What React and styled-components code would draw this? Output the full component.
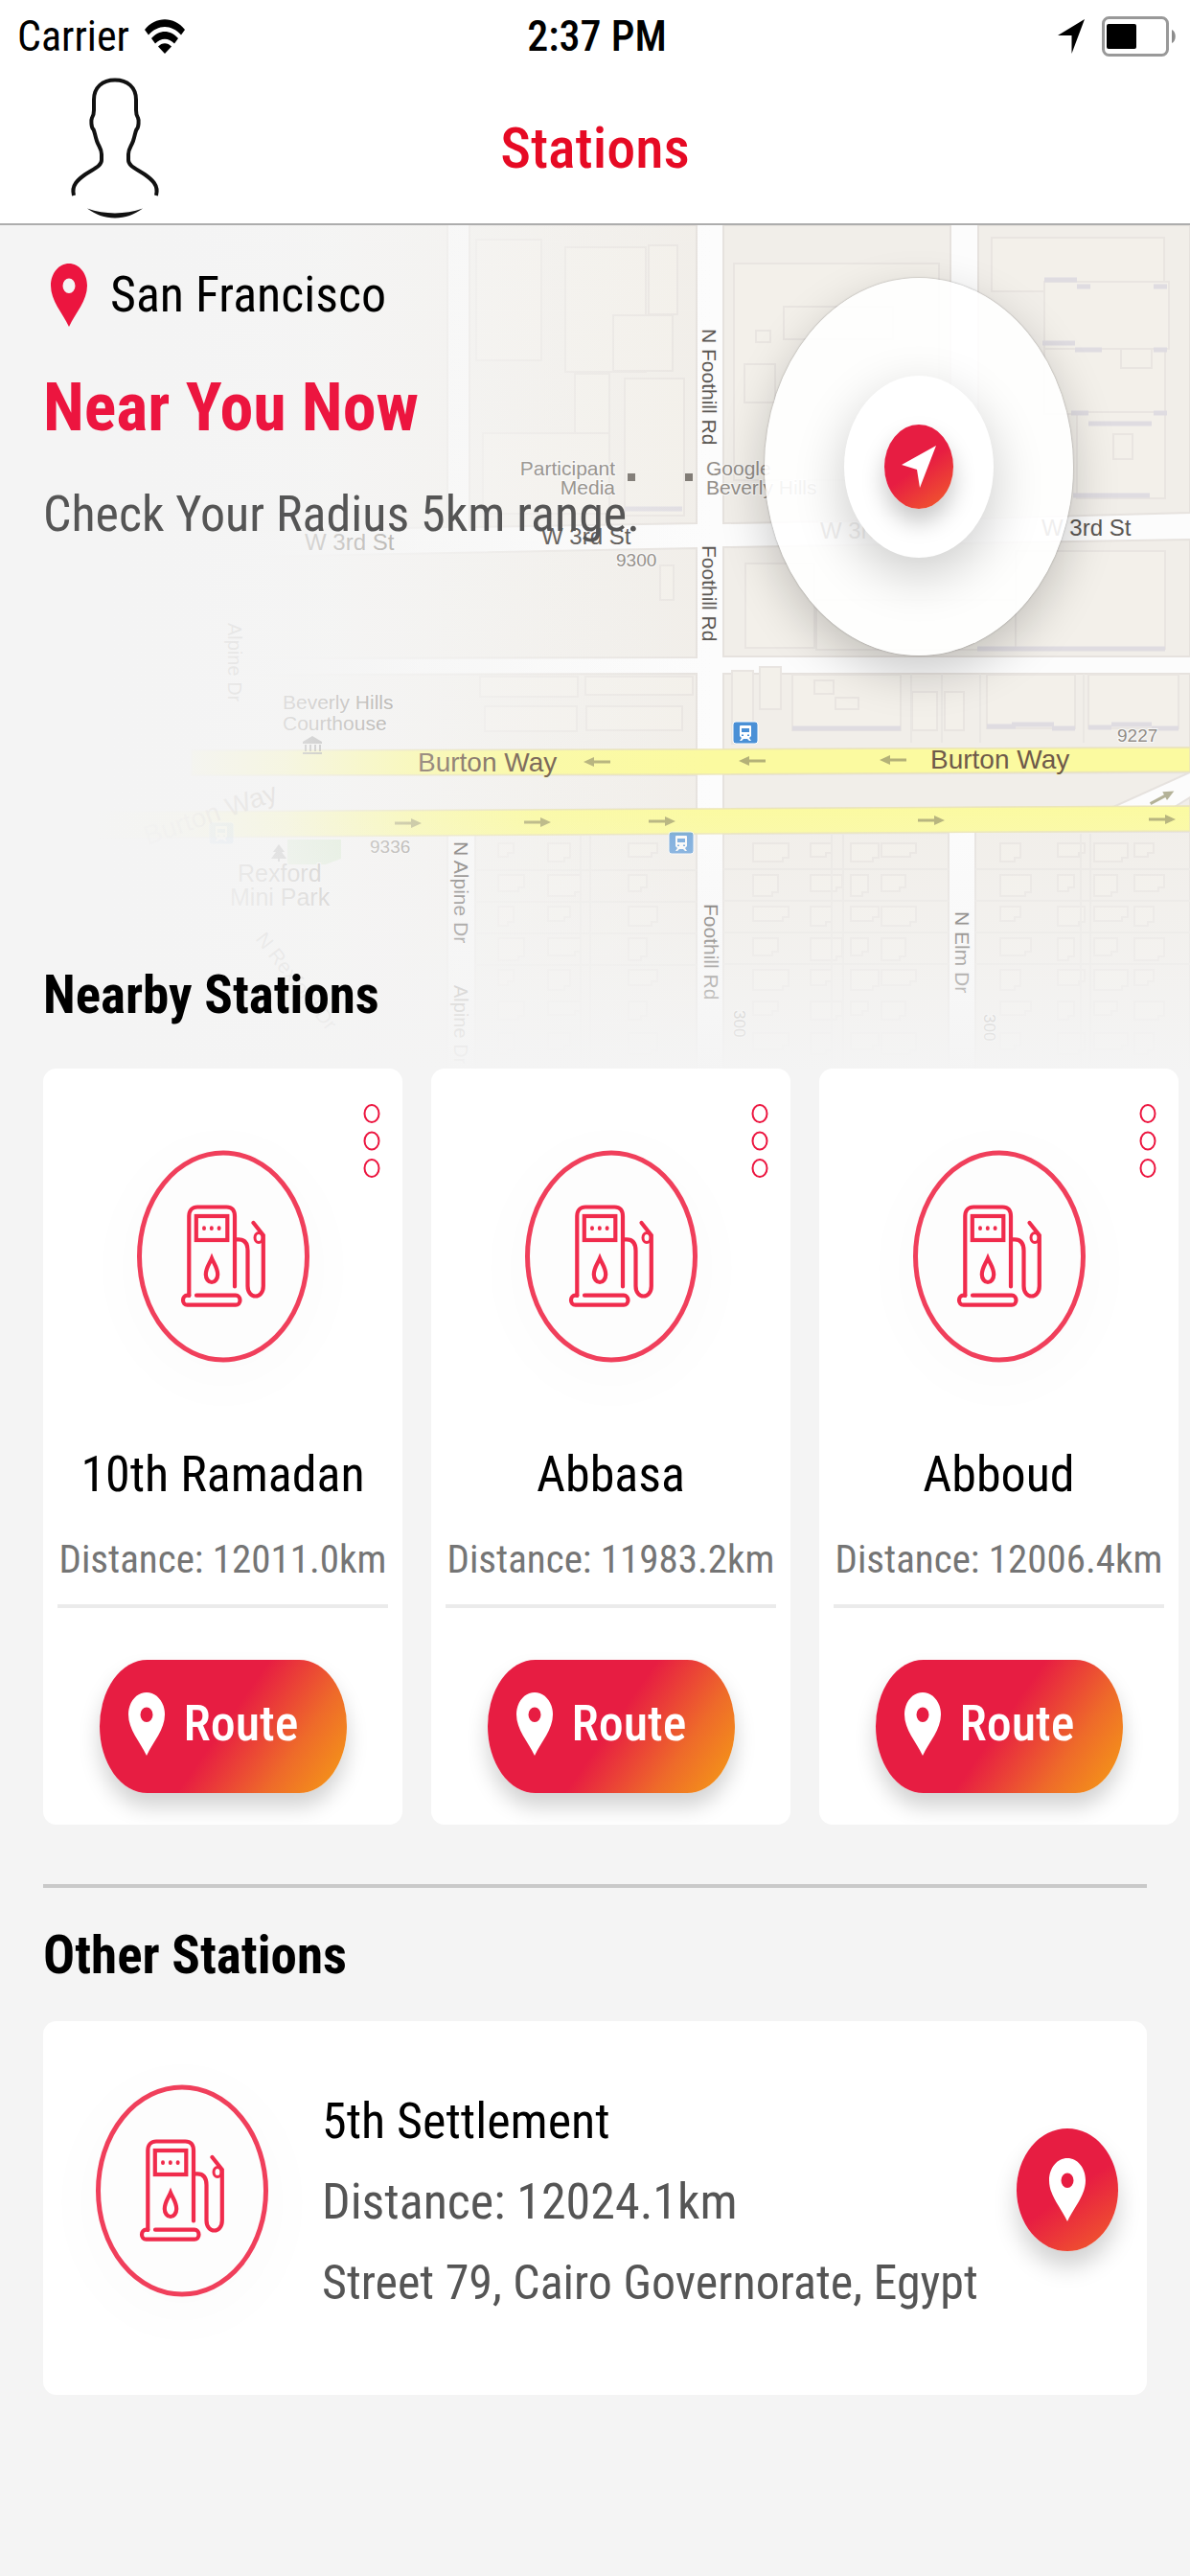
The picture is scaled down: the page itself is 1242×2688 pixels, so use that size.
import React from "react";
import styled, { createGlobalStyle } from "styled-components";

const PAGE_BG = "#f4f4f4";
const RED = "#ec153f";
const GRADIENT = "#e71d42";

const GlobalStyle = createGlobalStyle`
  * { box-sizing: border-box; }
  body {
    margin: 0;
    background: ${PAGE_BG};
    color: #000;
    font-family: "Roboto Condensed", Roboto, "Liberation Sans", sans-serif;
  }
  h1, h2, h3, p { margin: 0; }
  button { border: 0; padding: 0; font-family: inherit; cursor: pointer; }
`;

const Screen = styled.div`
  min-height: 100vh;
  background: ${PAGE_BG};
`;

const TopBar = styled.header`
  background: #fff;
  border-bottom: 2px solid #adadad;
`;

const StatusRow = styled.div`
  display: grid;
  grid-template-columns: 1fr auto 1fr;
  align-items: center;
  height: 76px;
  padding: 0 14px 0 18px;
  font-size: 44px;
  line-height: 52px;
`;

const StatusGroup = styled.div`
  display: flex;
  align-items: center;
  justify-content: ${(p) => (p.$end ? "flex-end" : "flex-start")};
  gap: ${(p) => (p.$end ? 18 : 16)}px;
`;

const Clock = styled.time`
  font-weight: 500;
`;

const NavRow = styled.div`
  display: grid;
  grid-template-columns: 1fr auto 1fr;
  align-items: center;
  height: 157px;
  padding: 0 72px;
`;

const AvatarButton = styled.button`
  justify-self: start;
  display: flex;
  background: none;
`;

const Title = styled.h1`
  font-size: 60px;
  line-height: 72px;
  font-weight: 500;
  color: #e60a24;
`;

const Hero = styled.section`
  position: relative;
  display: flex;
  flex-direction: column;
  min-height: 880px;
  padding: 40px 45px 45px;
`;

const MapLayer = styled.svg`
  position: absolute;
  inset: 0;
  width: 100%;
  height: 100%;
  font-family: "Liberation Sans", sans-serif;
`;

const Place = styled.div`
  position: relative;
  display: flex;
  align-items: center;
  gap: 24px;
  padding-left: 8px;
  font-size: 52px;
  line-height: 64px;
`;

const Lead = styled.h2`
  position: relative;
  margin-top: 42px;
  font-size: 70px;
  line-height: 84px;
  font-weight: 700;
  color: ${RED};
`;

const Hint = styled.p`
  position: relative;
  margin-top: 38px;
  font-size: 52px;
  line-height: 64px;
  color: #555;
`;

const SectionTitle = styled.h2`
  position: relative;
  margin-top: ${(p) => (p.$push ? "auto" : "0")};
  font-size: 55px;
  line-height: 64px;
  font-weight: 700;
`;

const Locator = styled.button`
  position: absolute;
  top: 55px;
  right: 122px;
  display: grid;
  place-items: center;
  width: 322px;
  height: 394px;
  border-radius: 50%;
  background: rgba(255, 255, 255, 0.9);
  box-shadow: 0 18px 50px rgba(0, 0, 0, 0.2), 0 0 2px rgba(0, 0, 0, 0.35);
`;

const LocatorInner = styled.span`
  display: grid;
  place-items: center;
  width: 156px;
  height: 190px;
  border-radius: 50%;
  background: #fff;
  box-shadow: 0 18px 54px rgba(0, 0, 0, 0.2);
`;

const LocatorCore = styled.span`
  display: grid;
  place-items: center;
  width: 72px;
  height: 88px;
  border-radius: 50%;
  background: linear-gradient(145deg, ${GRADIENT} 50%, #f2602a 100%);
  box-shadow: 0 14px 24px rgba(0, 0, 0, 0.22);
`;

const CardRow = styled.ul`
  display: flex;
  gap: 30px;
  margin: 0;
  padding: 0 0 0 45px;
  list-style: none;
  overflow-x: auto;
`;

const Card = styled.li`
  position: relative;
  flex: 0 0 375px;
  display: flex;
  flex-direction: column;
  align-items: center;
  padding: 85px 15px 33px;
  border-radius: 14px;
  background: #fff;
`;

const MoreButton = styled.button`
  position: absolute;
  top: 36px;
  right: 22px;
  display: flex;
  background: none;
`;

const PumpFrame = styled.div`
  display: flex;
  flex: none;
  border-radius: 50%;
  background: #fdfdfd;
  box-shadow: 0 12px 70px 10px rgba(0, 0, 0, 0.02);
`;

const CardName = styled.h3`
  margin-top: 85px;
  font-size: 52px;
  line-height: 64px;
  font-weight: 400;
`;

const CardDistance = styled.p`
  align-self: stretch;
  margin-top: 30px;
  padding-bottom: 21px;
  border-bottom: 4px solid #ebebeb;
  font-size: 41px;
  line-height: 52px;
  text-align: center;
  white-space: nowrap;
  color: #757575;
`;

const RouteButton = styled.button`
  display: flex;
  align-items: center;
  gap: 20px;
  width: 258px;
  height: 139px;
  margin-top: 54px;
  padding: 0 30px 6px;
  border-radius: 50px / 70px;
  background: linear-gradient(125deg, ${GRADIENT} 50%, #ee6a2a 76%, #f59a16 98%);
  box-shadow: 0 14px 22px rgba(0, 0, 0, 0.18);
  color: #fff;
  font-size: 52px;
  line-height: 64px;
  font-weight: 500;
`;

const PinIcon = styled.svg`
  flex: none;
`;

const Others = styled.section`
  display: flex;
  flex-direction: column;
  gap: 37px;
  margin: 62px 45px 0;
  padding-top: 38px;
  border-top: 4px solid #c9c9c9;
`;

const WideCard = styled.article`
  display: flex;
  align-items: flex-start;
  gap: 36px;
  padding: 66px 30px 85px 55px;
  border-radius: 14px;
  background: #fff;
`;

const Details = styled.div`
  flex: 1;
  display: flex;
  flex-direction: column;
  gap: 20px;
  padding: 7px 0 0 20px;
  line-height: 64px;
  color: #555;
`;

const DetailName = styled.h3`
  font-size: 52px;
  font-weight: 400;
  color: #000;
`;

const DetailLine = styled.p`
  font-size: ${(p) => (p.$small ? 50 : 52)}px;
`;

const RoundButton = styled.button`
  display: grid;
  place-items: center;
  flex: none;
  width: 106px;
  height: 128px;
  margin-top: 46px;
  border-radius: 50%;
  background: linear-gradient(145deg, ${GRADIENT} 52%, #f2602a 100%);
  box-shadow: 0 16px 24px rgba(0, 0, 0, 0.18);
`;

function Pin({ color, wide = 38 }) {
  return (
    <PinIcon width={wide} height="66" viewBox="0 0 38 66" preserveAspectRatio="none" aria-hidden="true">
      <path
        fill={color}
        fillRule="evenodd"
        d="M19 0C8.500 0 0 10 0 23c0 16 12 28 19 43 7-15 19-27 19-43C38 10 29.500 0 19 0Zm0 15.500a6.500 7.700 0 1 1 0 15.400a6.500 7.700 0 1 1 0-15.400Z"
      />
    </PinIcon>
  );
}

function Wifi() {
  return (
    <svg width="42" height="36" viewBox="0 0 42 36" aria-hidden="true">
      <path d="M0 11C11-3.500 31-3.500 42 11l-4 5.500C28 5 14 5 4 16.500Z" />
      <path d="M7 20c8-9.500 20-9.500 28 0l-4 5.500c-6-6.500-14-6.500-20 0Z" />
      <path d="M14 28.500c4-4.500 10-4.500 14 0L21 36Z" />
    </svg>
  );
}

function StatusArrow() {
  return (
    <svg width="28" height="36" viewBox="0 0 28 36" aria-hidden="true">
      <path d="M28 0 14.500 36V17H0Z" />
    </svg>
  );
}

function Battery() {
  return (
    <svg width="78" height="42" viewBox="0 0 78 42" aria-hidden="true">
      <rect x="1.500" y="1.500" width="67" height="39" rx="6" fill="#fff" stroke="#999" strokeWidth="3" />
      <rect x="5" y="8" width="31" height="26" rx="2" />
      <path d="M73 14c5 2 5 12 0 14Z" fill="#8c8c8c" />
    </svg>
  );
}

function Avatar() {
  return (
    <svg width="96" height="148" viewBox="-2 0 96 148" fill="none" aria-hidden="true">
      <path
        stroke="#111"
        strokeWidth="4"
        d="M3 123C0 112 8 106 15 101C24 95 32 92 32 86V80C32 74 29 72 27 66C25 60 25 57 23.500 54C21 52 21 44 22 42C24 39 24 37 24 34V23C24 10 33 2.500 46 2.500S68 10 68 23V34C68 37 68 39 70 42C71 44 71 52 68.500 54C67 57 67 60 65 66C63 72 60 74 60 80V86C60 92 68 95 77 101C84 106 92 112 89 123"
      />
      <path fill="#111" d="M17 136.500C36 143 56 143 75 136.500C66 143 57 146.500 46 146.500S26 143 17 136.500Z" />
    </svg>
  );
}

function MoreDots() {
  return (
    <svg width="20" height="80" viewBox="0 0 20 80" fill="#fff" stroke={RED} strokeWidth="2" aria-hidden="true">
      {[11, 39.5, 68].map((y) => (
        <ellipse key={y} cx="10" cy={y} rx="7.500" ry="9" />
      ))}
    </svg>
  );
}

function Pump() {
  return (
    <svg
      width="180"
      height="222"
      viewBox="0 0 180 222"
      fill="none"
      stroke="#f02b4c"
      strokeWidth="4.200"
      strokeLinecap="round"
      aria-hidden="true"
    >
      <ellipse cx="90" cy="111" rx="87.500" ry="108" stroke="#f03f5b" strokeWidth="5" />
      <path d="M54.300 152V69C54.300 63 58 59.500 63 59.500H93.500C99 59.500 102 63 102 69V142.500" />
      <path d="M54.300 151.700H52.500A4.500 5 0 0 0 52.500 161.700H103A4.500 5 0 0 0 103 151.700H62" />
      <rect x="61.800" y="69" width="32.500" height="25" />
      <path d="M78 113C75.500 119 71.800 123 71.800 130A6.200 8 0 0 0 84.200 130C84.200 123 80.500 119 78 113Z" />
      <path d="M103 93.300H106C113 93.300 115.500 98 115.500 105V142C115.500 156 131.800 156 131.800 142V89L121.500 76" />
      <ellipse cx="127" cy="91.500" rx="4" ry="5" strokeWidth="3" />
      <g fill="#f02b4c" stroke="none">
        <ellipse cx="70" cy="81.700" rx="2" ry="2.400" />
        <ellipse cx="77.800" cy="81.700" rx="2" ry="2.400" />
        <ellipse cx="85.600" cy="81.700" rx="2" ry="2.400" />
      </g>
    </svg>
  );
}

function PumpBadge() {
  return (
    <PumpFrame>
      <Pump />
    </PumpFrame>
  );
}

const lots = [
  [497, 250, 68, 126], [590, 258, 84, 130], [600, 390, 36, 66], [652, 395, 62, 143], [677, 256, 30, 72],
  [504, 452, 132, 84], [640, 329, 62, 58], [766, 275, 214, 226], [818, 320, 114, 34], [777, 380, 32, 40],
  [789, 345, 15, 12], [1035, 248, 180, 56], [1090, 294, 130, 70], [1090, 364, 126, 68], [1124, 430, 92, 90],
  [1162, 453, 20, 26], [1170, 364, 32, 20], [689, 590, 14, 36], [778, 588, 72, 88], [852, 626, 230, 52],
  [1060, 575, 156, 102], [501, 706, 102, 21], [506, 737, 96, 26], [611, 706, 112, 19], [612, 737, 100, 25],
  [764, 700, 22, 76], [793, 696, 22, 44], [827, 704, 113, 58], [850, 710, 20, 14], [872, 728, 24, 12],
  [952, 722, 26, 40], [986, 722, 20, 40], [1030, 704, 92, 56], [1136, 704, 94, 56],
];

const houses = [];
[520, 572, 656, 786, 846, 888, 920, 1044, 1104, 1142, 1184].forEach((x, col) => {
  for (let row = 0; row < 7; row += 1) {
    const w = 16 + ((col * 7 + row * 11) % 22);
    const h = 14 + ((col * 5 + row * 3) % 10);
    houses.push([x, 880 + row * 33, w, h]);
  }
});

const blocks = [
  "M0 235H467V550L0 560Z", "M490 235H727V546L490 550Z", "M755 235H992V542L755 546Z", "M1021 235H1242V535L1021 541Z",
  "M0 586L727 572V686L0 688Z", "M755 571L1242 563V685H755Z",
  "M0 705L727 703V782H0Z", "M755 703H1242V780L755 782Z",
  "M0 809H727V844L0 848Z", "M755 808L1242 806L1162 842L755 844Z", "M1242 832L1226 842H1242Z",
  "M0 874L467 871V1120H0Z", "M496 871L727 870V1120H496Z", "M755 870L990 869V1120H755Z", "M1018 868H1242V1120H1018Z",
];

const labels = [
  { t: "Participant", x: 642, y: 496, s: 21, end: true }, { t: "Media", x: 642, y: 516, s: 21, end: true },
  { t: "Google", x: 737, y: 496, s: 21 }, { t: "Beverly Hills", x: 737, y: 516, s: 21 },
  { t: "9300", x: 643, y: 591, s: 19 }, { t: "9227", x: 1166, y: 774, s: 19 }, { t: "9336", x: 386, y: 890, s: 19 },
  { t: "Beverly Hills", x: 295, y: 740, s: 21 }, { t: "Courthouse", x: 295, y: 762, s: 21 },
  { t: "Rexford", x: 248, y: 920, s: 25 }, { t: "Mini Park", x: 240, y: 945, s: 25 },
  { t: "W 3rd St", x: 318, y: 574, s: 24 }, { t: "W 3rd St", x: 565, y: 568, s: 24, dark: true },
  { t: "W 3rd St", x: 856, y: 562, s: 24, dark: true }, { t: "W 3rd St", x: 1087, y: 559, s: 24, dark: true },
  { t: "N Foothill Rd", x: 733, y: 343, s: 21, turn: 90, dark: true },
  { t: "Foothill Rd", x: 733, y: 569, s: 21, turn: 90, dark: true },
  { t: "Foothill Rd", x: 735, y: 943, s: 21, turn: 90, dark: true },
  { t: "N Elm Dr", x: 997, y: 951, s: 21, turn: 90, dark: true },
  { t: "N Alpine Dr", x: 474, y: 878, s: 21, turn: 90, dark: true },
  { t: "Alpine Dr", x: 474, y: 1028, s: 20, turn: 90 },
  { t: "300", x: 766, y: 1054, s: 17, turn: 90 }, { t: "300", x: 1027, y: 1058, s: 17, turn: 90 },
  { t: "Alpine Dr", x: 238, y: 650, s: 20, turn: 90 },
  { t: "N Rexford Dr", x: 266, y: 980, s: 21, turn: 52 },
];

function Arrow({ x, y, turn = 0 }) {
  return (
    <path
      transform={`translate(${x} ${y}) rotate(${turn})`}
      d="M-14 -1.500H3V-5L14 0L3 5V1.500H-14Z"
      fill="#8d8b63"
      opacity="0.65"
    />
  );
}

function Bus({ x, y, opacity }) {
  return (
    <g transform={`translate(${x} ${y})`} opacity={opacity}>
      <rect width="26" height="23" rx="3" fill="#4a90d6" stroke="#fff" strokeWidth="1" />
      <path fill="#fff" d="M8 4h10q1 0 1 1v10l-2 2 2 3h-2l-2-2h-4l-2 2H7l2-3-2-2V5q0-1 1-1Z" />
      <path fill="#4a90d6" d="M9 7h8v4H9ZM9 13.500h2v1.500H9Zm6 0h2v1.500h-2Z" />
    </g>
  );
}

function StreetMap() {
  return (
    <MapLayer viewBox="0 235 1242 880" preserveAspectRatio="xMaxYMin slice" aria-hidden="true">
      <defs>
        <linearGradient id="fadeGround" x1="0" x2="1" y1="0" y2="0">
          <stop offset="0.200" stopColor="#f6f6f5" stopOpacity="1" />
          <stop offset="0.360" stopColor="#f6f6f5" stopOpacity="0.600" />
          <stop offset="0.600" stopColor="#f6f6f5" stopOpacity="0" />
        </linearGradient>
        <linearGradient id="fadeLeft" x1="0" x2="1" y1="0" y2="0">
          <stop offset="0" stopColor={PAGE_BG} />
          <stop offset="0.080" stopColor={PAGE_BG} />
          <stop offset="0.160" stopColor={PAGE_BG} stopOpacity="0.950" />
          <stop offset="0.240" stopColor={PAGE_BG} stopOpacity="0.780" />
          <stop offset="0.350" stopColor={PAGE_BG} stopOpacity="0.350" />
          <stop offset="0.450" stopColor={PAGE_BG} stopOpacity="0.100" />
          <stop offset="0.600" stopColor={PAGE_BG} stopOpacity="0" />
        </linearGradient>
        <linearGradient id="fadeDown" x1="0" x2="0" y1="0" y2="1">
          <stop offset="0.680" stopColor={PAGE_BG} stopOpacity="0" />
          <stop offset="0.860" stopColor={PAGE_BG} stopOpacity="0.500" />
          <stop offset="1" stopColor={PAGE_BG} stopOpacity="1" />
        </linearGradient>
      </defs>
      <rect x="0" y="235" width="1242" height="885" fill="#fcfcfc" />
      <g fill="#f1eee9" stroke="#e6e2de" strokeWidth="2">
        {blocks.map((d) => (
          <path key={d} d={d} />
        ))}
      </g>
      <g fill="#f3f0ea" stroke="#e9e5e1" strokeWidth="2">
        {lots.map(([x, y, w, h]) => (
          <path key={`${x}-${y}`} d={`M${x} ${y}h${w}v${h}h${-w}Z`} />
        ))}
        {houses.map(([x, y, w, h]) => (
          <path key={`h${x}-${y}`} d={`M${x} ${y}h${w}v${h - 4}h-6v4h${6 - w}Z`} />
        ))}
      </g>
      <g stroke="#eae7e3" strokeWidth="2">
        <path d="M496 908H727M755 907H990M1018 907H1242M496 941H727M755 940H990M1018 940H1242M496 974H727M755 973H990M1018 973H1242M496 1007H727M755 1006H990M1018 1006H1242" />
        <path d="M606 871V1110M616 871V1110M868 870V1110M880 870V1110M1128 870V1110M1138 870V1110M951 703V775M983 703V775M1023 703V775M1131 703V775" />
      </g>
      <g stroke="#dfdce1" strokeWidth="5">
        <path d="M827 760H940M1030 758H1060M1056 756H1100M1098 760H1122M1136 759H1160M1160 756H1202M1202 760H1230M1090 292H1124M1124 299H1138M1204 299H1218M1088 358H1122M1122 365H1150M1204 365H1218M1118 431H1136M1204 431H1218M1136 442H1202M1120 517H1200M1020 677H1216M652 531H712" />
      </g>
      <rect x="0" y="235" width="1242" height="885" fill="url(#fadeGround)" />
      <path fill="#fbfaa0" stroke="#ebe5b8" strokeWidth="1.500" d="M200 783L727 782L1242 780V805L727 808L200 809Z" />
      <path fill="#fbfaa0" stroke="#ebe5b8" strokeWidth="1.500" d="M0 848L727 844L1242 841V867L727 870L0 875Z" />
      <path fill="#d3e9c9" d="M300 876H356V896L340 902H300Z" />
      <g>
        {[[623, 795], [785, 794], [932, 793]].map(([x, y]) => (
          <Arrow key={x} x={x} y={y} turn={180} />
        ))}
        {[[426, 859], [561, 858], [691, 857], [972, 856], [1213, 855]].map(([x, y]) => (
          <Arrow key={x} x={x} y={y} />
        ))}
        <Arrow x={1213} y={832} turn={-28} />
      </g>
      <g fill="#7f7a74">
        <rect x="655" y="494" width="8" height="8" />
        <rect x="715" y="494" width="8" height="8" />
      </g>
      <path
        fill="#777"
        opacity="0.800"
        d="M316 774l10-6 10 6v2h-20ZM318 777h2v7h-2ZM323 777h2v7h-2ZM328 777h2v7h-2ZM333 777h2v7h-2ZM316 785h20v2h-20ZM291 881l6 8h-3l5 7h-7v3h-2v-3h-7l5-7h-3Z"
      />
      <Bus x={765} y={753} opacity={1} />
      <Bus x={698} y={868} opacity={0.75} />
      <Bus x={218} y={858} opacity={0.4} />
      <g fontSize="28" fill="#6f5a4a" stroke="#fbfaa0" strokeWidth="1" paintOrder="stroke">
        <text x="436" y="805">Burton Way</text>
        <text x="971" y="802">Burton Way</text>
        <text transform="translate(154 882) rotate(-19)" opacity="0.500" stroke="none">Burton Way</text>
      </g>
      <g stroke="#fafafa" strokeWidth="2" paintOrder="stroke">
        {labels.map(({ t, x, y, s, end, turn, dark }) => (
          <text
            key={`${t}${x}${y}`}
            transform={`translate(${x} ${y}) rotate(${turn || 0})`}
            fontSize={s}
            fill={dark ? "#5a5652" : "#928d87"}
            textAnchor={end ? "end" : "start"}
          >
            {t}
          </text>
        ))}
      </g>
      <rect x="0" y="235" width="1242" height="885" fill="url(#fadeLeft)" />
      <rect x="0" y="235" width="1242" height="885" fill="url(#fadeDown)" />
    </MapLayer>
  );
}

const nearby = [
  { name: "10th Ramadan", distance: "12011.0km" },
  { name: "Abbasa", distance: "11983.2km" },
  { name: "Abboud", distance: "12006.4km" },
];

function StationCard({ name, distance }) {
  return (
    <Card>
      <MoreButton type="button" aria-label={`More about ${name}`}>
        <MoreDots />
      </MoreButton>
      <PumpBadge />
      <CardName>{name}</CardName>
      <CardDistance>Distance: {distance}</CardDistance>
      <RouteButton type="button">
        <Pin color="#fff" />
        Route
      </RouteButton>
    </Card>
  );
}

export default function App() {
  return (
    <Screen>
      <GlobalStyle />
      <TopBar>
        <StatusRow>
          <StatusGroup>
            <span>Carrier</span>
            <Wifi />
          </StatusGroup>
          <Clock>2:37 PM</Clock>
          <StatusGroup $end>
            <StatusArrow />
            <Battery />
          </StatusGroup>
        </StatusRow>
        <NavRow>
          <AvatarButton type="button" aria-label="Profile">
            <Avatar />
          </AvatarButton>
          <Title>Stations</Title>
        </NavRow>
      </TopBar>
      <main>
        <Hero>
          <StreetMap />
          <Locator type="button" aria-label="Locate me">
            <LocatorInner>
              <LocatorCore>
                <svg width="36" height="44" viewBox="0 0 36 44" aria-hidden="true">
                  <path fill="#fff" d="M36 0 19 44 16 25 0 20Z" />
                </svg>
              </LocatorCore>
            </LocatorInner>
          </Locator>
          <Place>
            <Pin color={RED} />
            San Francisco
          </Place>
          <Lead>Near You Now</Lead>
          <Hint>Check Your Radius 5km range.</Hint>
          <SectionTitle $push>Nearby Stations</SectionTitle>
        </Hero>
        <CardRow>
          {nearby.map((s) => (
            <StationCard key={s.name} {...s} />
          ))}
        </CardRow>
        <Others>
          <SectionTitle>Other Stations</SectionTitle>
          <WideCard>
            <PumpBadge />
            <Details>
              <DetailName>5th Settlement</DetailName>
              <DetailLine>Distance: 12024.1km</DetailLine>
              <DetailLine $small>Street 79, Cairo Governorate, Egypt</DetailLine>
            </Details>
            <RoundButton type="button" aria-label="Route to 5th Settlement">
              <Pin color="#fff" />
            </RoundButton>
          </WideCard>
        </Others>
      </main>
    </Screen>
  );
}
